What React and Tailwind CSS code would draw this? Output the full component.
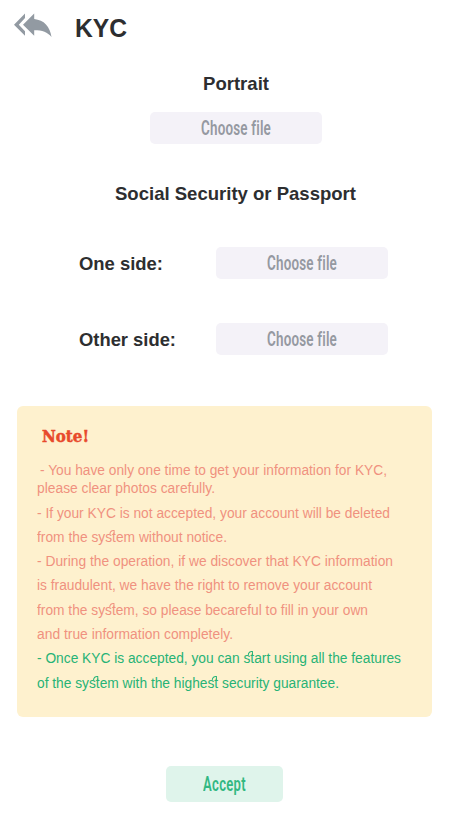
import { useLayoutEffect, useRef, useState } from "react";

// Condenses or widens one line of text so that it spans exactly `width` pixels.
function Fit({ width, className = "", children }) {
  const ref = useRef(null);
  const [scale, setScale] = useState(1);
  useLayoutEffect(() => {
    setScale(width / ref.current.getBoundingClientRect().width * scale);
  }, [width]);
  return (
    <span className={`block ${className}`} style={{ width }}>
      <span
        ref={ref}
        className="inline-block origin-left whitespace-pre"
        style={{ transform: `scaleX(${scale})` }}
      >
        {children}
      </span>
    </span>
  );
}

// "st" with the small arc that ties the two letters together.
function St() {
  return (
    <span className="relative">
      st
      <svg
        className="absolute left-[4px] top-[1px] h-[6px] w-[7px]"
        viewBox="0 0 7 6"
        fill="none"
        stroke="currentColor"
        strokeWidth="1.1"
      >
        <path d="M0.8 5.4C1 2.6 3 1.2 5.6 1.6V5" />
      </svg>
    </span>
  );
}

function FileButton() {
  return (
    <button className="flex h-8 w-[172px] justify-center rounded-[5px] bg-[#f4f2f8] font-[Roboto,sans-serif] text-[21px] leading-8 font-semibold tracking-[0.3px] text-[#9599a1]">
      <Fit width={70}>Choose file</Fit>
    </button>
  );
}

export default function App() {
  return (
    <main className="flex h-[824px] w-[450px] flex-col overflow-hidden bg-white font-['Liberation_Sans',Arial,sans-serif] text-[#2d2e30]">
      <header className="flex h-14 pl-[14px]">
        <svg className="mt-[13px] h-6 w-[38px] text-[#929aa2]" viewBox="0 0 38 24" fill="currentColor">
          <path d="M11 0.5V5L4.8 11.8L11 18.2V22.8L0 11.8Z" />
          <path d="M20.2 0.5V6C30 7 36 13.5 37.5 24C33.5 19 28.5 17.2 20.2 17.2V22.8L9 11.8Z" />
        </svg>
        <h1 className="ml-[23px] text-[25px] leading-14 font-bold">
          <Fit width={52}>KYC</Fit>
        </h1>
      </header>

      <section className="flex h-[88px] flex-col items-center pt-4 pl-[21px]">
        <h2 className="h-10 text-[19px] leading-[23px] font-bold">
          <Fit width={66}>Portrait</Fit>
        </h2>
        <FileButton />
      </section>

      <section className="flex flex-col">
        <h2 className="mt-[38px] ml-[115px] h-[65px] text-[19px] leading-[23px] font-bold">
          <Fit width={241}>Social Security or Passport</Fit>
        </h2>
        <div className="flex h-[76px] pl-[79px]">
          <div className="w-[137px] pt-px text-[19px] leading-8 font-bold">
            <Fit width={84}>One side:</Fit>
          </div>
          <FileButton />
        </div>
        <div className="flex h-8 pl-[79px]">
          <div className="w-[137px] pt-px text-[19px] leading-8 font-bold">
            <Fit width={97}>Other side:</Fit>
          </div>
          <FileButton />
        </div>
      </section>

      <section className="mt-[51px] ml-[17px] h-[311px] w-[415px] rounded-[6px] bg-[#fef1ce] pt-[19px] pl-[19.5px] text-[15.3px] text-[#f0917f]">
        <h3 className="mb-[12px] ml-[5px] h-6 font-['DejaVu_Serif',serif] text-[16px] leading-[23px] font-bold text-[#e8492c] [-webkit-text-stroke:0.5px_#e8492c]">
          <Fit width={47}>Note!</Fit>
        </h3>
        <div className="h-[39.5px] leading-[18.4px]">
          <Fit width={347} className="pl-[3.5px]">- You have only one time to get your information for KYC,</Fit>
          <Fit width={178}>please clear photos carefully.</Fit>
        </div>
        <div className="leading-[24.3px]">
          <Fit width={353}>- If your KYC is not accepted, your account will be deleted</Fit>
          <Fit width={190} className="pl-[0.5px]">from the sy<St />em without notice.</Fit>
          <Fit width={356}>- During the operation, if we discover that KYC information</Fit>
          <Fit width={335}>is fraudulent, we have the right to remove your account</Fit>
          <Fit width={331} className="pl-[0.5px]">from the sy<St />em, so please becareful to fill in your own</Fit>
          <Fit width={196}>and true information completely.</Fit>
          <div className="text-[#27b376]">
            <Fit width={364}>- Once KYC is accepted, you can <St />art using all the features</Fit>
            <Fit width={302}>of the sy<St />em with the highe<St /> security guarantee.</Fit>
          </div>
        </div>
      </section>

      <button className="mt-[49px] ml-[166px] flex h-9 w-[117px] shrink-0 justify-center rounded-[5px] bg-[#dff4eb] font-[Roboto,sans-serif] text-[20px] leading-9 font-semibold tracking-[0.5px] text-[#32b882]">
        <Fit width={43}>Accept</Fit>
      </button>
    </main>
  );
}
